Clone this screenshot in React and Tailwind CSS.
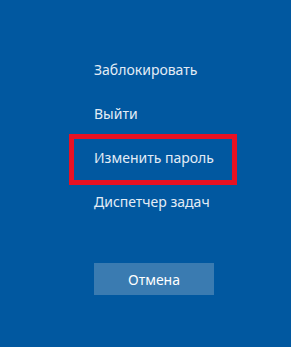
const items = ['Заблокировать', 'Выйти', 'Изменить пароль', 'Диспетчер задач']

export default function App() {
  return (
    <div
      className="h-[347px] w-[291px] overflow-hidden bg-[#0158a0] text-[14px] text-[#e3ecf6]"
      style={{ fontFamily: '"Noto Sans", "Open Sans", sans-serif' }}
    >
      <div className="flex flex-col pl-[94px] pt-[48px]">
        {items.map((item, i) => (
          <div key={item} className="relative flex h-[44px] items-center">
            {i === 2 && (
              <span className="absolute left-[-25px] top-[-2px] h-[51px] w-[168px] border-[5px] border-[#e81123]" />
            )}
            <span className="relative leading-none">{item}</span>
          </div>
        ))}
        <button className="mt-[39px] h-[32px] w-[120px] bg-[#3a7bb1] text-[14px] text-white">
          Отмена
        </button>
      </div>
    </div>
  )
}
